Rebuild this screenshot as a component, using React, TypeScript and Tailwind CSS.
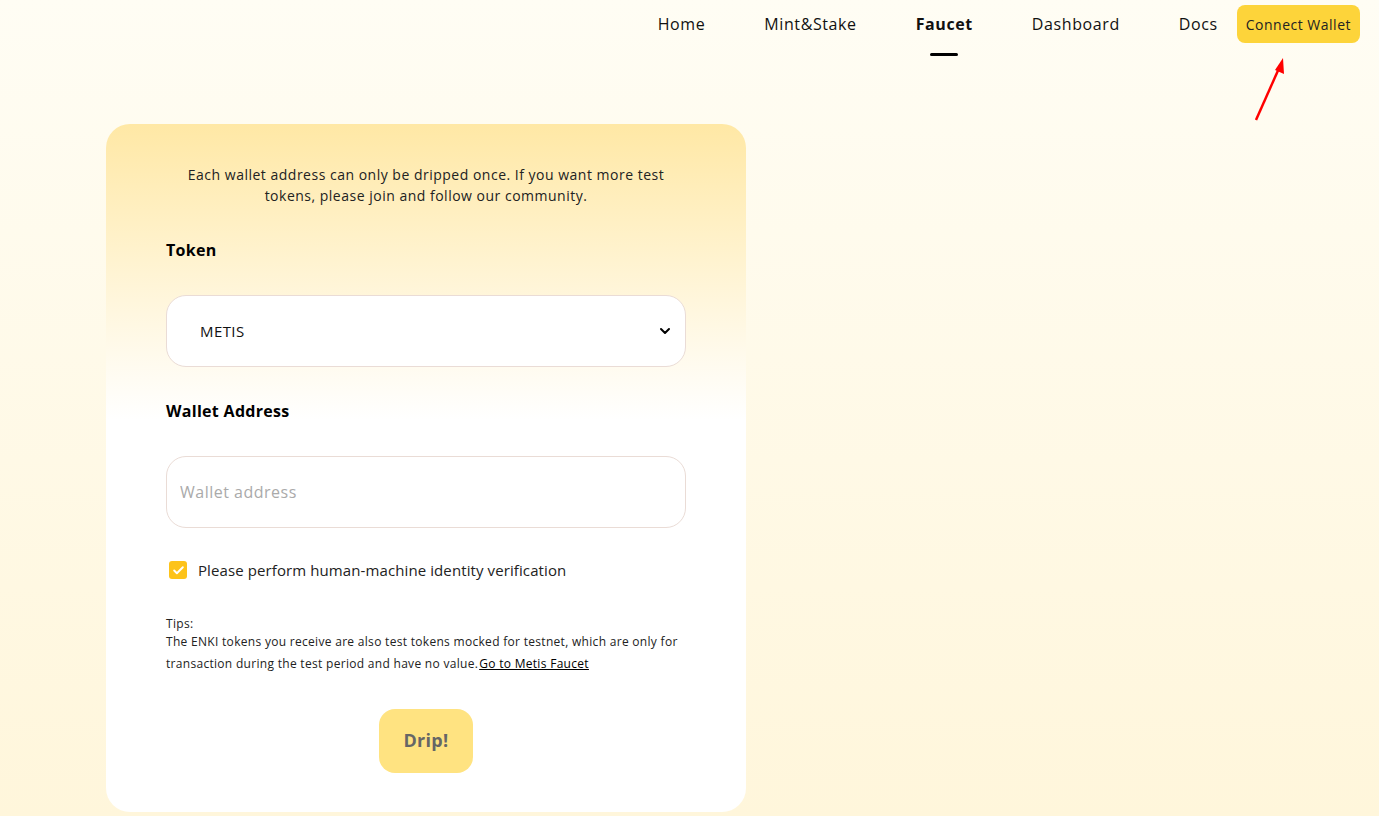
import { ChevronDown, Check } from "lucide-react";

const navItems = ["Home", "Mint&Stake", "Faucet", "Dashboard", "Docs"];

const Header = () => {
  return (
    <header className="flex h-[57px] justify-end items-start pt-[5px] pr-[19px] tracking-[0.6px]">
      <nav className="flex items-start gap-[59px] mr-[19px]">
        {navItems.map((item) => (
          <div key={item} className="flex flex-col items-center">
            <a
              className={`text-[16px] leading-[38px] text-[#111] ${
                item === "Faucet" ? "font-bold" : ""
              }`}
            >
              {item}
            </a>
            {item === "Faucet" && (
              <span className="mt-[10px] block h-[3px] w-7 rounded-full bg-black" />
            )}
          </div>
        ))}
      </nav>
      <button className="h-[38px] px-[9px] rounded-lg bg-[#fdd43a] text-[14px] tracking-[0.5px] text-[#222]">
        Connect Wallet
      </button>
    </header>
  );
};

const Arrow = () => (
  <svg
    className="absolute left-[1250px] top-[54px]"
    width="40"
    height="72"
    viewBox="0 0 40 72"
  >
    <line x1="6" y1="66" x2="30" y2="12" stroke="#f00" strokeWidth="2.5" />
    <polygon points="33,4 34,20 25,16" fill="#f00" />
  </svg>
);

const FaucetCard = () => {
  return (
    <div className="w-[640px] rounded-[24px] bg-gradient-to-b from-[#ffe8a5] via-white via-[43%] to-white px-[60px] pt-[40px] pb-[39px]">
      <p className="px-5 text-center text-[14px] leading-[21px] tracking-[0.5px] text-[#222]">
        Each wallet address can only be dripped once. If you want more test
        tokens, please join and follow our community.
      </p>

      <h4 className="mt-[32px] text-[16px] font-bold leading-6 tracking-[0.3px] text-black">
        Token
      </h4>
      <div className="mt-[33px] flex h-[72px] items-center justify-between rounded-[20px] border border-[#eadcd6] bg-white pl-[33px] pr-[12px]">
        <span className="text-[15px] tracking-[0.4px] text-[#111]">METIS</span>
        <ChevronDown size={16} strokeWidth={3} className="text-black" />
      </div>

      <h4 className="mt-[32px] text-[16px] font-bold leading-6 tracking-[0.3px] text-black">
        Wallet Address
      </h4>
      <input
        placeholder="Wallet address"
        className="mt-[33px] h-[72px] w-full rounded-[20px] border border-[#eadcd6] bg-white px-[13px] text-[16px] tracking-[0.5px] outline-none placeholder:text-[#aaa]"
      />

      <label className="mt-[31px] flex items-center gap-[11px] pl-[3px]">
        <span className="grid h-[18px] w-[18px] place-items-center rounded-[3px] bg-[#fdc31a]">
          <Check size={13} strokeWidth={3.5} className="text-white" />
        </span>
        <span className="text-[15px] tracking-[0.1px] text-[#222]">
          Please perform human-machine identity verification
        </span>
      </label>

      <div className="mt-[35px] text-[12px] tracking-[0.3px] text-[#222]">
        <p className="leading-[14px]">Tips:</p>
        <p className="leading-[22px]">
          The ENKI tokens you receive are also test tokens mocked for testnet,
          which are only for transaction during the test period and have no
          value.
          <a className="ml-px underline text-black">Go to Metis Faucet</a>
        </p>
      </div>

      <div className="mt-[34px] flex justify-center">
        <button className="h-16 w-[94px] rounded-2xl bg-[#ffe381] text-[18px] font-bold tracking-[0.3px] text-[#666]">
          Drip!
        </button>
      </div>
    </div>
  );
};

export default function App() {
  return (
    <div
      className="relative min-h-[816px] bg-gradient-to-b from-[#fffdf4] to-[#fff6db]"
      style={{ fontFamily: '"Open Sans", "Liberation Sans", sans-serif' }}
    >
      <Header />
      <Arrow />
      <main className="pl-[106px] pt-[67px]">
        <FaucetCard />
      </main>
    </div>
  );
}
